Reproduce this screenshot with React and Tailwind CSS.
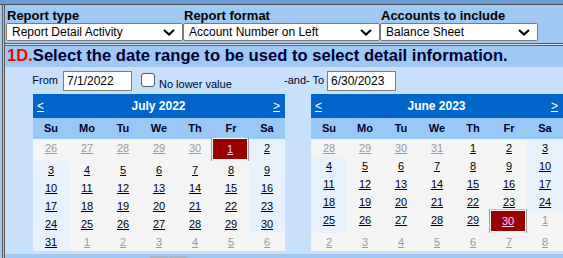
import React from "react";

const DAYS = ["Su", "Mo", "Tu", "We", "Th", "Fr", "Sa"];

// build a 6-row month grid, days outside the month flagged as "other"
function buildWeeks(startDow, daysInMonth, prevMonthDays) {
  const weeks = [];
  for (let r = 0; r < 6; r++) {
    const row = [];
    for (let c = 0; c < 7; c++) {
      const n = r * 7 + c - startDow + 1;
      if (n < 1) row.push({ d: prevMonthDays + n, other: true });
      else if (n > daysInMonth) row.push({ d: n - daysInMonth, other: true });
      else row.push({ d: n, other: false });
    }
    weeks.push(row);
  }
  return weeks;
}

function Chevron() {
  return (
    <svg width="12" height="7" viewBox="0 0 12 7" className="shrink-0">
      <path d="M1 1 L6 5.5 L11 1" fill="none" stroke="#000" strokeWidth="2.2" />
    </svg>
  );
}

function SelectBox({ label, value, width }) {
  return (
    <div className="flex flex-col" style={{ width }}>
      <div className="h-[18px] pl-[1px] pt-[3px] text-[13px] leading-[15px] font-bold text-black">{label}</div>
      <div className="h-[18px] bg-white border border-[#7a7a7a] rounded-[2px] flex items-center justify-between pl-[5px] pr-[7px]">
        <span className="text-[12px] text-black">{value}</span>
        <Chevron />
      </div>
    </div>
  );
}

function Calendar({ title, weeks, selected }) {
  return (
    <div className="w-[252px]">
      <div className="h-[24px] bg-[#0066cc] flex items-center justify-between pl-[4px] pr-[5px] text-white text-[12px]">
        <span className="underline">&lt;</span>
        <span className="font-bold">{title}</span>
        <span className="underline">&gt;</span>
      </div>
      <div className="grid grid-cols-7 h-[21px] bg-[#99c8f5] items-center text-center text-[11px] font-bold text-[#000033]">
        {DAYS.map((d) => (
          <div key={d}>{d}</div>
        ))}
      </div>
      {weeks.map((week, r) => {
        const tall = week.some((x) => !x.other && x.d === selected);
        return (
          <div key={r} className="grid grid-cols-7">
            {week.map((x, c) => {
              const weekend = (c === 0 || c === 6) && !x.other;
              const isSel = !x.other && x.d === selected;
              return (
                <div
                  key={c}
                  className={
                    "relative flex items-center justify-center text-[11px] " +
                    (tall ? "h-[22px] pb-[4px] " : "h-[18px] ") +
                    (weekend ? "bg-[#e6f1fc]" : "bg-[#f4f4f4]")
                  }
                >
                  <span className={"underline " + (x.other ? "text-[#9a9a9a]" : "text-black")}>{x.d}</span>
                  {isSel && (
                    <div className="absolute -top-[2px] -left-[2px] right-0 -bottom-[1px] border border-[#9c9c9c] border-t-[#c4c4c4] bg-[#f4f4f4] pt-[1px] pl-[1px] pr-[1px] pb-[2px]">
                      <div className="w-full h-full bg-[#990000] flex items-center justify-center">
                        <span className="underline text-[#ffccff] text-[11px]">{x.d}</span>
                      </div>
                    </div>
                  )}
                </div>
              );
            })}
          </div>
        );
      })}
    </div>
  );
}

export default function App() {
  const july = buildWeeks(5, 31, 30);
  const june = buildWeeks(4, 30, 31);

  return (
    <div className="w-[563px] h-[258px] overflow-hidden bg-[#9fc8f3] font-['Liberation_Sans',Arial,sans-serif]">
      <div className="h-[4px] bg-[#6a9bd6]" />
      <div className="h-[1px] bg-[#4d4d4d]" />

      <div className="ml-[2px] border-l-[3px] border-double border-[#5a5a5a]">
        {/* report options */}
        <div className="h-[38px] flex pl-[1px]">
          <SelectBox label="Report type" value="Report Detail Activity" width={177} />
          <SelectBox label="Report format" value="Account Number on Left" width={197} />
          <SelectBox label="Accounts to include" value="Balance Sheet" width={158} />
        </div>
        <div className="h-[3px] border-y border-[#5a5a5a] bg-[#d6e6f6]" />

        {/* section 1D */}
        <div className="h-[21px] flex items-center pl-[2px] text-[16.6px] font-bold text-[#000033] whitespace-nowrap">
          <span className="text-[#ff0000]">1D.</span>
          <span>Select the date range to be used to select detail information.</span>
        </div>

        <div className="bg-[#c8e0f9]">
          <div className="h-[26px] flex items-center pt-[1px] text-[11px] text-[#000033]">
            <div className="w-[58px] flex justify-end pr-[5px]">From</div>
            <div className="w-[69px] h-[20px] bg-white border border-[#7a7a7a] flex items-center pl-[3px] text-[12px] text-black">7/1/2022</div>
            <div className="w-[152px] flex items-center pl-[9px]">
              <div className="w-[14px] h-[14px] bg-white border border-[#555] rounded-[3px] mb-[2px]" />
              <span className="ml-[4px] mt-[8px]">No lower value</span>
            </div>
            <div className="w-[43px]">-and- To</div>
            <div className="w-[69px] h-[20px] bg-white border border-[#7a7a7a] flex items-center pl-[3px] text-[12px] text-black">6/30/2023</div>
          </div>

          <div className="flex pt-[1px] pl-[28px] gap-[26px]">
            <Calendar title="July 2022" weeks={july} selected={1} />
            <Calendar title="June 2023" weeks={june} selected={30} />
          </div>
          <div className="h-[3px]" />
        </div>

        <div className="h-[4px] bg-[#9fc8f3] flex pl-[145px] pt-[2px] gap-[1px]">
          <div className="w-[18px] h-[2px] bg-[#a9b6c8]" />
          <div className="w-[18px] h-[2px] bg-[#a9b6c8]" />
        </div>
      </div>
    </div>
  );
}
